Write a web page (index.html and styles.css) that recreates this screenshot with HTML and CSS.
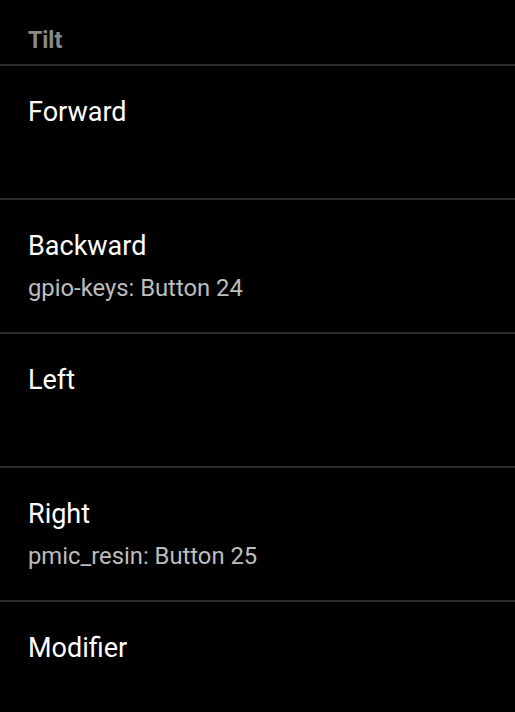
FILE: index.html
```html
<!DOCTYPE html>
<html lang="en">
  <head>
    <meta charset="UTF-8" />
    <title>Tilt</title>
    <link rel="stylesheet" href="styles.css">
  </head>
  <body>
    <div class="category">Tilt</div>

    <div class="pref">
      <div class="pref-title">Forward</div>
    </div>
    <div class="pref">
      <div class="pref-title">Backward</div>
      <div class="pref-summary">gpio-keys: Button 24</div>
    </div>
    <div class="pref">
      <div class="pref-title">Left</div>
    </div>
    <div class="pref">
      <div class="pref-title">Right</div>
      <div class="pref-summary">pmic_resin: Button 25</div>
    </div>
    <div class="pref">
      <div class="pref-title">Modifier</div>
    </div>
  </body>
</html>
```

FILE: styles.css
```css
body {
  margin: 0;
  background-color: #000;
  font-family: Roboto, "Noto Sans", sans-serif;
  color: #fff;
}

.category {
  height: 64px;
  box-sizing: border-box;
  padding: 26px 28px 0;
  font-size: 23px;
  line-height: 30px;
  font-weight: bold;
  color: #8a8a8a;
}

.pref {
  height: 134px;
  box-sizing: border-box;
  border-top: 2px solid #2a2a2a;
  padding: 29px 28px 0;
}

.pref-title {
  font-size: 27px;
  line-height: 34px;
}

.pref-summary {
  margin-top: 10px;
  font-size: 23.8px;
  line-height: 30px;
  color: #bdbdbd;
}
```
